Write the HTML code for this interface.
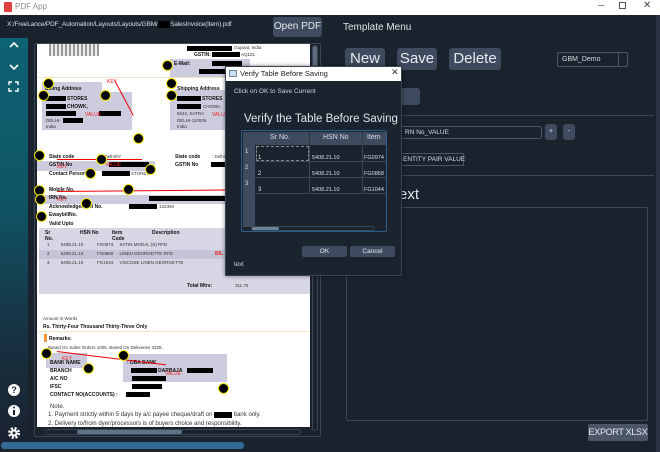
<!DOCTYPE html>
<html><head><meta charset="utf-8"><style>
*{box-sizing:border-box;margin:0;padding:0}
body{width:660px;height:452px;overflow:hidden;background:#1a222e;font-family:"Liberation Sans",sans-serif;position:relative;color:#dfe3ea}
.a{position:absolute}
.btn{position:absolute;background:#3e4b5e;border-radius:3px;color:#e6e9ee;text-align:center;white-space:nowrap}
.dot{position:absolute;width:11px;height:11px;border-radius:50%;background:#000;border:1.5px solid #f2e600}
.blk{position:absolute;background:#000}
.gb{position:absolute;background:#ccccde}
.t{position:absolute;color:#111;font-size:5px;font-weight:bold;white-space:nowrap}
.tn{position:absolute;color:#333;font-size:4.5px;white-space:nowrap}
.red{position:absolute;height:1px;background:#e00;transform-origin:0 0}
.rt{position:absolute;color:#e22;font-size:5px;white-space:nowrap}
</style></head><body>
<!-- title bar -->
<div class="a" style="left:0;top:0;width:660px;height:15px;background:#fff"></div>
<div class="a" style="left:4px;top:2px;width:8px;height:10px;background:#e04040;border-radius:1px"></div>
<div class="a" style="left:15px;top:2px;font-size:8px;color:#888">PDF App</div>
<div class="a" style="left:598px;top:0;font-size:9px;color:#444">─</div>
<div class="a" style="left:619px;top:2px;width:7px;height:7px;border:1px solid #555"></div>
<div class="a" style="left:643px;top:0;font-size:10px;color:#444">✕</div>
<div class="a" style="left:656px;top:15px;width:4px;height:437px;background:#2a3342"></div>
<!-- path -->
<div class="a" style="left:7px;top:21px;font-size:6.5px;letter-spacing:-0.15px;color:#d8dde4;white-space:nowrap">X:/FreeLance/PDF_Automation/Layouts/Layouts/GBM/<span style="background:#000;color:#000">xxxx</span>SalesInvoice(Item).pdf</div>
<div class="btn" style="left:273px;top:17px;width:49px;height:20px;font-size:10px;line-height:20px">Open PDF</div>
<div class="a" style="left:343px;top:22px;font-size:10px;color:#e0e4ea;white-space:nowrap">Template Menu</div>
<!-- sidebar -->
<div class="a" style="left:0;top:38px;width:28px;height:407px;background:linear-gradient(#0d6274 0%,#0f5565 40%,#183040 75%,#1a2230 100%)"></div>
<svg class="a" style="left:8px;top:38px" width="12" height="60"><path d="M2 9l4-4 4 4" stroke="#fff" stroke-width="1.6" fill="none"/><path d="M2 27l4 4 4-4" stroke="#fff" stroke-width="1.6" fill="none"/><path d="M1 47v-3h3M7 44h3v3M10 50v3h-3M4 53h-3v-3" stroke="#fff" stroke-width="1.4" fill="none"/></svg>
<svg class="a" style="left:7px;top:381px" width="16" height="64"><circle cx="7" cy="9" r="6" fill="#fff"/><text x="7" y="12" font-size="9" text-anchor="middle" fill="#1a222e" font-weight="bold" font-family="Liberation Sans">?</text><circle cx="7" cy="30" r="6" fill="#fff"/><rect x="6" y="29" width="2" height="5" fill="#1a222e"/><circle cx="7" cy="26.5" r="1" fill="#1a222e"/><circle cx="7" cy="52" r="4.5" fill="none" stroke="#fff" stroke-width="3" stroke-dasharray="2 1.6"/><circle cx="7" cy="52" r="3.5" fill="#fff"/><circle cx="7" cy="52" r="1.5" fill="#1a222e"/></svg>
<!-- doc frame -->
<div class="a" style="left:34px;top:43px;width:287px;height:394px;border:1px solid #394455;border-radius:2px"></div>
<div class="a" style="left:37px;top:44px;width:273px;height:383px;background:#fff;overflow:hidden">
 <div class="a" style="left:12px;top:0;width:50px;height:12px;background:repeating-linear-gradient(90deg,#999 0 2px,#eee 2px 4px)"></div>
 <div class="blk" style="left:150px;top:2px;width:45px;height:5px"></div><div class="tn" style="left:196px;top:1px">,Gujarat, India</div>
 <div class="t" style="left:157px;top:8px">GSTIN:</div><div class="blk" style="left:175px;top:8px;width:28px;height:5px"></div><div class="tn" style="left:204px;top:8px">AQ1ZL</div>
 <div class="gb" style="left:133px;top:15px;width:80px;height:18px"></div>
 <div class="t" style="left:137px;top:17px">E-Mail:</div><div class="blk" style="left:175px;top:17px;width:30px;height:5px"></div>
 <div class="blk" style="left:162px;top:25px;width:30px;height:5px"></div>
 <div class="a" style="left:0;top:33px;width:273px;height:1px;background:#f3e1c8"></div>
 <div class="gb" style="left:5px;top:38px;width:60px;height:10px"></div>
 <div class="t" style="left:8px;top:42px">Billing Address</div>
 <div class="gb" style="left:5px;top:48px;width:90px;height:38px"></div>
 <div class="blk" style="left:9px;top:52px;width:20px;height:5px"></div><div class="t" style="left:30px;top:52px">STORES</div>
 <div class="blk" style="left:9px;top:60px;width:20px;height:5px"></div><div class="t" style="left:30px;top:60px">CHOWK,</div>
 <div class="blk" style="left:9px;top:67px;width:30px;height:5px"></div><div class="blk" style="left:62px;top:67px;width:22px;height:5px"></div>
 <div class="tn" style="left:9px;top:74px">DELHI-</div><div class="blk" style="left:26px;top:74px;width:20px;height:5px"></div><div class="tn" style="left:9px;top:80px">India</div>
 <div class="gb" style="left:133px;top:46px;width:80px;height:40px"></div>
 <div class="t" style="left:140px;top:42px">Shipping Address</div>
 <div class="blk" style="left:140px;top:52px;width:24px;height:5px"></div><div class="t" style="left:165px;top:52px">STORES</div>
 <div class="blk" style="left:140px;top:60px;width:24px;height:5px"></div><div class="tn" style="left:166px;top:60px">CHOWK,</div>
 <div class="tn" style="left:140px;top:67px">5542, KATRA</div><div class="tn" style="left:140px;top:74px">DELHI-110006</div><div class="tn" style="left:140px;top:80px">India</div>
 <div class="rt" style="left:48px;top:68px">VALUE</div><div class="rt" style="left:175px;top:68px">VALUE</div>
 <div class="t" style="left:12px;top:110px">State code</div><div class="tn" style="left:65px;top:110px">: Delhi/07</div>
 <div class="t" style="left:138px;top:110px">State code</div><div class="tn" style="left:175px;top:110px">: Delhi</div>
 <div class="gb" style="left:0;top:117px;width:118px;height:10px"></div>
 <div class="t" style="left:12px;top:118px">GSTIN No</div><div class="blk" style="left:72px;top:118px;width:40px;height:5px"></div>
 <div class="t" style="left:138px;top:118px">GSTIN No</div><div class="blk" style="left:174px;top:118px;width:25px;height:5px"></div>
 <div class="t" style="left:12px;top:127px">Contact Person</div><div class="blk" style="left:65px;top:127px;width:28px;height:5px"></div><div class="tn" style="left:94px;top:127px">STORES</div>
 <div class="t" style="left:12px;top:143px">Mobile No.</div><div class="gb" style="left:0;top:151px;width:273px;height:9px"></div>
 <div class="t" style="left:12px;top:151px">IRN No.</div><div class="blk" style="left:112px;top:152px;width:80px;height:5px"></div>
 <div class="t" style="left:12px;top:160px">Acknowledgement No.</div><div class="blk" style="left:92px;top:160px;width:28px;height:5px"></div><div class="tn" style="left:122px;top:160px">132390</div>
 <div class="t" style="left:12px;top:168px">EwaybillNo.</div><div class="t" style="left:12px;top:177px">Valid Upto</div>
 <div class="gb" style="left:2px;top:184px;width:271px;height:66px;background:#d6d6e4"></div>
 <div class="t" style="left:8px;top:186px">Sr<br>No.</div><div class="t" style="left:43px;top:186px">HSN No</div><div class="t" style="left:75px;top:186px">Item<br>Code</div><div class="t" style="left:115px;top:186px">Description</div>
 <div class="a" style="left:2px;top:206px;width:271px;height:9px;background:#c4c4d6"></div>
 <div class="tn" style="left:10px;top:198px">1 &nbsp; &nbsp; &nbsp; &nbsp; 5408.21.10 &nbsp; &nbsp; &nbsp; &nbsp; &nbsp; FG0974 &nbsp; &nbsp; SATIN MODAL (S) RFD</div>
 <div class="tn" style="left:10px;top:207px">2 &nbsp; &nbsp; &nbsp; &nbsp; 5408.21.10 &nbsp; &nbsp; &nbsp; &nbsp; &nbsp; FG0868 &nbsp; &nbsp; LINEN GEORGETTE RFD</div>
 <div class="tn" style="left:10px;top:216px">3 &nbsp; &nbsp; &nbsp; &nbsp; 5408.21.10 &nbsp; &nbsp; &nbsp; &nbsp; &nbsp; FG1044 &nbsp; &nbsp; VISCOSE LINEN GEORGETTE</div>
 <div class="rt" style="left:178px;top:207px;font-weight:bold">BIL</div>
 <div class="t" style="left:150px;top:239px">Total Mtrs:</div><div class="tn" style="left:198px;top:239px">311.75</div>
 <div class="tn" style="left:6px;top:272px">Amount in Words</div>
 <div class="t" style="left:6px;top:280px">Rs. Thirty-Four Thousand Thirty-Three Only</div>
 <div class="a" style="left:0;top:287px;width:273px;height:1px;background:#f3e1c8"></div>
 <div class="a" style="left:7px;top:290px;width:3px;height:8px;background:#f39a3a"></div><div class="t" style="left:12px;top:292px">Remarks:</div>
 <div class="tn" style="left:11px;top:301px">Based On Sales Orders 1005, Based On Deliveries 3335.</div>
 <div class="gb" style="left:9px;top:309px;width:41px;height:15px"></div>
 <div class="gb" style="left:86px;top:310px;width:104px;height:28px"></div>
 <div class="t" style="left:13px;top:316px">BANK NAME</div><div class="t" style="left:90px;top:316px">: DBA BANK</div>
 <div class="t" style="left:13px;top:324px">BRANCH</div><div class="blk" style="left:94px;top:324px;width:26px;height:5px"></div><div class="t" style="left:121px;top:324px">DARBAJA</div><div class="blk" style="left:150px;top:324px;width:26px;height:5px"></div>
 <div class="t" style="left:13px;top:332px">A/C NO</div><div class="blk" style="left:95px;top:332px;width:34px;height:5px"></div>
 <div class="t" style="left:13px;top:340px">IFSC</div><div class="blk" style="left:95px;top:340px;width:30px;height:5px"></div>
 <div class="t" style="left:13px;top:348px">CONTACT NO(ACCOUNTS) :</div><div class="blk" style="left:89px;top:348px;width:24px;height:5px"></div>
 <div class="tn" style="left:13px;top:360px;font-size:6px">Note.</div>
 <div class="tn" style="left:11px;top:368px;font-size:6px">1. Payment strictly within 5 days by a/c payee cheque/draft on <span style="background:#000;color:#000">xxxxxx</span> bank only.</div>
 <div class="tn" style="left:11px;top:377px;font-size:6px">2. Delivery to/from dyer/processors is of buyers choice and responsibility.</div>
 <div class="red" style="left:78px;top:36px;width:40px;transform:rotate(62deg)"></div>
 <div class="red" style="left:205px;top:36px;width:40px;transform:rotate(74deg)"></div>
 <div class="red" style="left:20px;top:115px;width:85px"></div>
 <div class="red" style="left:20px;top:147px;width:245px;transform:rotate(-0.5deg)"></div>
 <div class="red" style="left:20px;top:307px;width:110px;transform:rotate(7deg)"></div>
 <div class="rt" style="left:70px;top:35px">KEY</div><div class="rt" style="left:200px;top:35px">KEY</div>
 <div class="rt" style="left:20px;top:120px">KEY</div><div class="rt" style="left:68px;top:118px">VALUE</div>
 <div class="rt" style="left:20px;top:153px">KEY</div><div class="rt" style="left:25px;top:312px">KEY</div><div class="rt" style="left:128px;top:327px">VALUE</div>
</div>
<!-- dots -->
<div class="dot" style="left:162px;top:60px"></div>
<div class="dot" style="left:43px;top:78px"></div><div class="dot" style="left:38px;top:90px"></div><div class="dot" style="left:100px;top:90px"></div>
<div class="dot" style="left:166px;top:78px"></div><div class="dot" style="left:166px;top:90px"></div>
<div class="dot" style="left:133px;top:133px"></div>
<div class="dot" style="left:34px;top:150px"></div><div class="dot" style="left:96px;top:154px"></div><div class="dot" style="left:85px;top:168px"></div><div class="dot" style="left:145px;top:164px"></div>
<div class="dot" style="left:34px;top:185px"></div><div class="dot" style="left:123px;top:184px"></div>
<div class="dot" style="left:35px;top:194px"></div><div class="dot" style="left:81px;top:198px"></div><div class="dot" style="left:36px;top:211px"></div>
<div class="dot" style="left:41px;top:348px"></div><div class="dot" style="left:118px;top:350px"></div><div class="dot" style="left:83px;top:363px"></div><div class="dot" style="left:218px;top:383px"></div>
<!-- scrollbars -->
<div class="a" style="left:312px;top:45px;width:6px;height:386px;border:1px solid #3a4556;border-radius:3px"></div>
<div class="a" style="left:313px;top:46px;width:4px;height:50px;background:#5d6b7e;border-radius:2px"></div>
<div class="a" style="left:45px;top:429px;width:256px;height:6px;border:1px solid #3a4556;border-radius:3px"></div>
<div class="a" style="left:77px;top:430px;width:105px;height:4px;background:#5d7488;border-radius:2px"></div>
<div class="a" style="left:1px;top:442px;width:243px;height:7px;background:#336a96;border-radius:3px"></div>
<!-- right panel -->
<div class="btn" style="left:345px;top:48px;width:40px;height:22px;font-size:15px;line-height:22px">New</div>
<div class="btn" style="left:397px;top:48px;width:40px;height:22px;font-size:15px;line-height:22px">Save</div>
<div class="btn" style="left:449px;top:48px;width:52px;height:22px;font-size:15px;line-height:22px">Delete</div>
<div class="a" style="left:557px;top:52px;width:71px;height:15px;border:1px solid #4a5566;border-radius:2px;font-size:7px;padding:3px 0 0 4px;color:#d8dde4">GBM_Demo<div class="a" style="left:60px;top:0;width:1px;height:13px;background:#4a5566"></div></div>
<div class="btn" style="left:385px;top:88px;width:35px;height:17px"></div>
<div class="a" style="left:345px;top:115px;width:309px;height:1px;background:#3c4757"></div>
<div class="a" style="left:360px;top:126px;width:182px;height:13px;border:1px solid #4a5566;border-radius:3px;font-size:6.5px;padding:2px 0 0 44px;color:#d8dde4">RN No_VALUE</div>
<div class="btn" style="left:545px;top:124px;width:12px;height:16px;font-size:7px;line-height:16px">+</div>
<div class="btn" style="left:563px;top:124px;width:12px;height:16px;font-size:7px;line-height:16px">-</div>
<div class="a" style="left:360px;top:153px;width:104px;height:13px;border:1px solid #4a5566;font-size:6.5px;padding:2px 0 0 42px;color:#d8dde4;white-space:nowrap">ENTITY PAIR VALUE</div>
<div class="a" style="left:345px;top:175px;width:309px;height:1px;background:#3c4757"></div>
<div class="a" style="left:399px;top:186px;font-size:15px;color:#e0e4ea">ext</div>
<div class="a" style="left:346px;top:207px;width:302px;height:214px;border:1px solid #3a4556;border-radius:2px"></div>
<div class="btn" style="left:588px;top:424px;width:60px;height:17px;font-size:9px;line-height:17px;border-radius:2px;background:#4a5668;letter-spacing:-0.3px">EXPORT XLSX</div>
<!-- dialog -->
<div class="a" style="left:225px;top:66px;width:177px;height:210px;background:#1b232f;border:1px solid #3a4454;box-shadow:0 0 4px rgba(0,0,0,.5)">
 <div class="a" style="left:0;top:0;width:175px;height:14px;background:#fff"></div>
 <div class="a" style="left:3px;top:3px;width:8px;height:7px;border:1px solid #6a8aa0;background:#cde"></div>
 <div class="a" style="left:14px;top:2px;font-size:7.5px;color:#222;white-space:nowrap">Verify Table Before Saving</div>
 <div class="a" style="left:165px;top:0;font-size:9px;color:#333">✕</div>
 <div class="a" style="left:8px;top:21px;font-size:6.5px;color:#ccd2da;white-space:nowrap">Click on OK to Save Current</div>
 <div class="a" style="left:18px;top:46px;font-size:11.5px;color:#dfe3ea;white-space:nowrap">Verify the Table Before Saving</div>
 <div class="a" style="left:15px;top:63px;width:146px;height:102px;border:1px solid #2d5f8c;border-radius:2px;overflow:hidden">
  <div class="a" style="left:1px;top:1px;width:12px;height:95px;background:#3e4b5e"></div>
  <div class="a" style="left:13px;top:1px;width:131px;height:13px;background:#3e4b5e;font-size:7px;color:#dde">
   <span class="a" style="left:15px;top:2px">Sr No.</span><span class="a" style="left:68px;top:2px">HSN No</span><span class="a" style="left:112px;top:2px">Item</span>
   <div class="a" style="left:54px;top:0;width:1px;height:13px;background:#2a3442"></div><div class="a" style="left:107px;top:0;width:1px;height:13px;background:#2a3442"></div>
  </div>
  <div class="a" style="left:3px;top:18px;font-size:6px;color:#dde">1</div><div class="a" style="left:3px;top:34px;font-size:6px;color:#dde">2</div><div class="a" style="left:3px;top:50px;font-size:6px;color:#dde">3</div>
  <div class="a" style="left:14px;top:15px;width:53px;height:15px;border:1px dashed #888"></div>
  <div class="a" style="left:13px;top:30px;width:131px;height:1px;background:#3a4555"></div>
  <div class="a" style="left:13px;top:46px;width:131px;height:1px;background:#3a4555"></div>
  <div class="a" style="left:13px;top:62px;width:131px;height:1px;background:#3a4555"></div>
  <div class="a" style="left:67px;top:14px;width:1px;height:48px;background:#3a4555"></div>
  <div class="a" style="left:120px;top:14px;width:1px;height:48px;background:#3a4555"></div>
  <div class="a" style="left:16px;top:19px;font-size:6px;color:#dde;line-height:16px">1<br>2<br>3</div>
  <div class="a" style="left:70px;top:19px;font-size:5.5px;color:#dde;line-height:16px">5408.21.10<br>5408.21.10<br>5408.21.10</div>
  <div class="a" style="left:122px;top:19px;font-size:5.5px;color:#dde;line-height:16px">FG0974<br>FG0868<br>FG1044</div>
  <div class="a" style="left:9px;top:95px;width:124px;height:5px;border:1px solid #3a4556;border-radius:3px"></div>
  <div class="a" style="left:10px;top:96px;width:27px;height:3px;background:#6d8499;border-radius:2px"></div>
 </div>
 <div class="btn" style="left:76px;top:179px;width:45px;height:11px;font-size:6.5px;line-height:11px;border-radius:2px">OK</div>
 <div class="btn" style="left:124px;top:179px;width:45px;height:11px;font-size:6.5px;line-height:11px;border-radius:2px">Cancel</div>
 <div class="a" style="left:8px;top:195px;font-size:6px;color:#ccd2da">text</div>
</div>
</body></html>
